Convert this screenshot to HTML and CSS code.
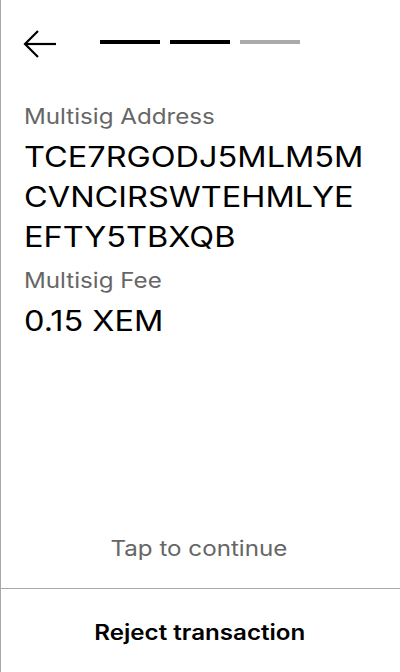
FILE: index.html
```html
<!DOCTYPE html>
<html>
<head>
<meta charset="utf-8">
<link rel="stylesheet" href="styles.css">
</head>
<body>
<div class="screen">
  <div class="header">
    <svg class="back" width="34" height="30" viewBox="0 0 34 30" fill="none" stroke="#000" stroke-width="2.2">
      <path d="M33 15 H2"/>
      <path d="M15 2 L2 15 L15 28"/>
    </svg>
    <div class="steps">
      <span class="step done"></span>
      <span class="step done"></span>
      <span class="step"></span>
    </div>
  </div>
  <div class="content">
    <div class="label">Multisig Address</div>
    <div class="value address">TCE7RGODJ5MLM5MCVNCIRSWTEHMLYEEFTY5TBXQB</div>
    <div class="label">Multisig Fee</div>
    <div class="value">0.15 XEM</div>
  </div>
  <div class="tap"><span class="wide">Tap to continue</span></div>
  <div class="footer"><span class="wide">Reject transaction</span></div>
</div>
</body>
</html>
```

FILE: styles.css
```css
html, body {
  margin: 0;
  padding: 0;
  background: #fff;
}
.screen {
  box-sizing: border-box;
  height: 672px;
  border-left: 1px solid #a8a8a8;
  display: flex;
  flex-direction: column;
  font-family: Inter, "Noto Sans", sans-serif;
  color: #000;
}
.header {
  height: 86px;
  display: flex;
  align-items: center;
  padding: 0 23px;
  box-sizing: border-box;
}
.back {
  display: block;
  margin-left: -1px;
  margin-top: 1px;
}
.steps {
  display: flex;
  gap: 10px;
  margin-left: 43px;
  margin-top: -2px;
}
.step {
  display: block;
  width: 60px;
  height: 4px;
  background: #aaaaaa;
}
.step.done {
  background: #000;
}
.content {
  flex: 1;
  padding: 19px 0 0 23px;
}
.label {
  font-size: 21px;
  line-height: 24px;
  color: #666;
  margin-bottom: 8px;
  width: 300px;
  transform: scaleX(1.15);
  transform-origin: left center;
}
.value {
  font-size: 28px;
  font-weight: 400;
  line-height: 40px;
  color: #000;
  margin-bottom: 12px;
  width: 300px;
  transform: scaleX(1.16);
  transform-origin: left center;
}
.address {
  word-break: break-all;
}
.wide {
  display: inline-block;
  transform: scaleX(1.15);
  transform-origin: center;
}
.tap {
  font-size: 21px;
  line-height: 24px;
  color: #666;
  text-align: center;
  margin-bottom: 27px;
  padding-right: 3px;
}
.footer {
  border-top: 1px solid #a8a8a8;
  height: 84px;
  box-sizing: border-box;
  display: flex;
  align-items: center;
  justify-content: center;
  padding-top: 3px;
  padding-right: 2px;
  font-size: 21px;
  font-weight: 600;
  color: #000;
}
```
